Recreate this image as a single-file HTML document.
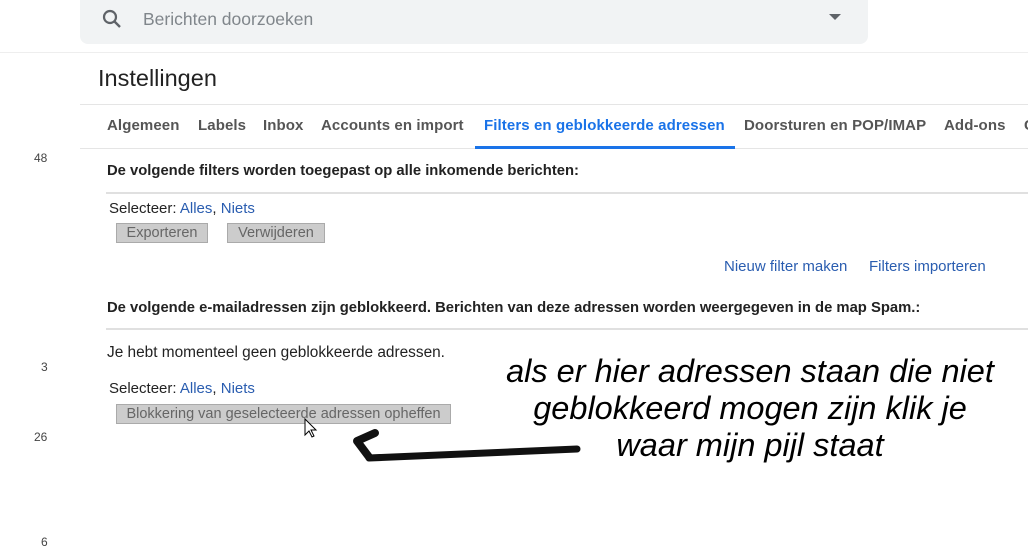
<!DOCTYPE html>
<html><head><meta charset="utf-8"><style>
body{margin:0;width:1028px;height:555px;overflow:hidden;background:#fff;font-family:"Liberation Sans",Arial,sans-serif;position:relative}
.a{position:absolute;white-space:nowrap}
.btn{position:absolute;background:#ccc;border:1px solid #aaa;color:#666;font-size:14.5px;height:20px;line-height:19px;box-sizing:border-box;text-align:center}
.lnk{color:#2a5db0}
.tab{position:absolute;top:117px;font-size:15px;font-weight:bold;color:#555;white-space:nowrap;letter-spacing:0.1px}
</style></head><body>
<div class="a" style="left:80px;top:0;width:788px;height:44px;background:#f1f3f4;border-radius:0 0 8px 8px"></div>
<svg class="a" style="left:100px;top:7px" width="24" height="24" viewBox="0 0 24 24"><circle cx="10" cy="10" r="6" fill="none" stroke="#5f6368" stroke-width="2.2"/><path d="M14.5 14.5L20 20" stroke="#5f6368" stroke-width="2.4"/></svg>
<div class="a" style="left:143px;top:9px;font-size:17.5px;color:#80868b">Berichten doorzoeken</div>
<svg class="a" style="left:829px;top:14px" width="12" height="8"><path d="M0 0h12L6 6z" fill="#5f6368"/></svg>
<div class="a" style="left:0;top:52px;width:1028px;height:1px;background:#eee"></div>
<div class="a" style="left:98px;top:65px;font-size:23.5px;color:#222">Instellingen</div>
<div class="a" style="left:80px;top:104px;width:948px;height:1px;background:#e5e5e5"></div>
<div class="tab" style="left:107px">Algemeen</div>
<div class="tab" style="left:198px">Labels</div>
<div class="tab" style="left:263px">Inbox</div>
<div class="tab" style="left:321px">Accounts en import</div>
<div class="tab" style="left:484px;color:#1a73e8">Filters en geblokkeerde adressen</div>
<div class="tab" style="left:744px">Doorsturen en POP/IMAP</div>
<div class="tab" style="left:944px">Add-ons</div>
<div class="tab" style="left:1024px">C</div>
<div class="a" style="left:80px;top:148px;width:948px;height:1px;background:#e5e5e5"></div>
<div class="a" style="left:475px;top:146px;width:260px;height:3px;background:#1a73e8"></div>
<div class="a" style="left:34px;top:151px;font-size:12px;color:#444">48</div>
<div class="a" style="left:41px;top:360px;font-size:12px;color:#444">3</div>
<div class="a" style="left:34px;top:430px;font-size:12px;color:#444">26</div>
<div class="a" style="left:41px;top:535px;font-size:12px;color:#444">6</div>
<div class="a" style="left:107px;top:163px;font-size:14.8px;font-weight:bold;color:#222">De volgende filters worden toegepast op alle inkomende berichten:</div>
<div class="a" style="left:106px;top:192px;width:922px;height:2px;background:#e0e0e0"></div>
<div class="a" style="left:109px;top:200px;font-size:15px;color:#222">Selecteer: <span class="lnk">Alles</span>, <span class="lnk">Niets</span></div>
<div class="btn" style="left:116px;top:223px;width:92px">Exporteren</div>
<div class="btn" style="left:227px;top:223px;width:98px">Verwijderen</div>
<div class="a lnk" style="left:724px;top:258px;font-size:15px">Nieuw filter maken</div>
<div class="a lnk" style="left:869px;top:258px;font-size:15px">Filters importeren</div>
<div class="a" style="left:107px;top:300px;font-size:14.8px;font-weight:bold;color:#222">De volgende e-mailadressen zijn geblokkeerd. Berichten van deze adressen worden weergegeven in de map Spam.:</div>
<div class="a" style="left:106px;top:328px;width:922px;height:2px;background:#e0e0e0"></div>
<div class="a" style="left:107px;top:344px;font-size:15.4px;color:#222">Je hebt momenteel geen geblokkeerde adressen.</div>
<div class="a" style="left:109px;top:380px;font-size:15px;color:#222">Selecteer: <span class="lnk">Alles</span>, <span class="lnk">Niets</span></div>
<div class="btn" style="left:116px;top:404px;width:335px">Blokkering van geselecteerde adressen opheffen</div>
<svg class="a" style="left:303px;top:418px" width="16" height="22" viewBox="0 0 16 22"><path d="M2 1v16l4-4 3 6 2-1-3-6h5z" fill="#fff" stroke="#000" stroke-width="1"/></svg>
<svg class="a" style="left:345px;top:425px" width="240" height="40"><path d="M30 8L12 16L24 32" fill="none" stroke="#111" stroke-width="8" stroke-linecap="round" stroke-linejoin="round"/><path d="M24 33L232 24" stroke="#111" stroke-width="7" stroke-linecap="round"/></svg>
<div class="a" style="left:480px;top:353px;width:540px;text-align:center;font-style:italic;font-size:32.5px;line-height:37px;color:#000;white-space:normal">als er hier adressen staan die niet<br>geblokkeerd mogen zijn klik je<br>waar mijn pijl staat</div>
</body></html>
